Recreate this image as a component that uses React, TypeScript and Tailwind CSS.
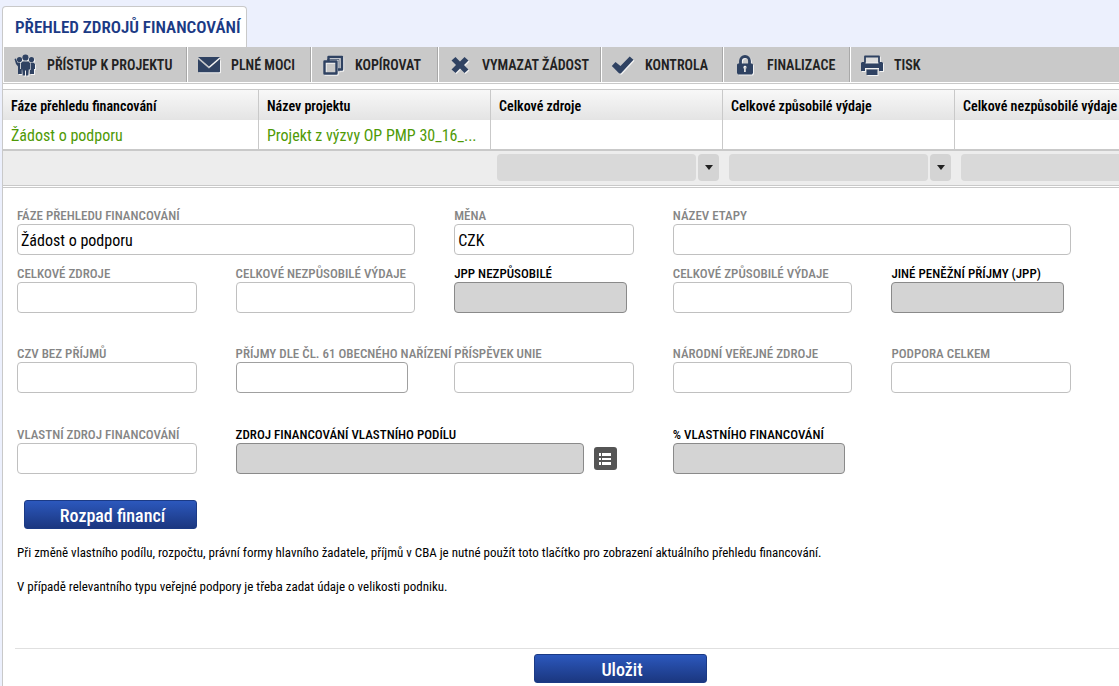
import { useState, type ReactNode } from "react";
import { clsx } from "clsx";

const iconClass = "h-[22px] w-[24px] shrink-0 text-[#2f4262] drop-shadow-[1px_1px_0_#f2f2f2]";

function Icon({ children }: { children: ReactNode }) {
  return (
    <svg viewBox="0 0 24 22" className={iconClass} fill="currentColor" aria-hidden>
      {children}
    </svg>
  );
}

const toolbar: { label: string; width: string; icon: ReactNode }[] = [
  {
    label: "Přístup k projektu",
    width: "w-[184px]",
    icon: (
      <Icon>
        <circle cx="12.500" cy="3.500" r="3.100" />
        <circle cx="6.500" cy="5.500" r="2.600" />
        <circle cx="18.500" cy="5.500" r="2.600" />
        <path d="M9.500 7.500h6l1.500 1.500v6.500h-1.200l-.5 6h-2.300v-5h-1v5H9.700l-.5-6H8V9z" />
        <path d="M1.500 5l1.500-.6L4.500 8.500h2.700v6.500h1.600v5H5V12.500L3 10z" />
        <path d="M17.600 8.500h2.700L22 10v5h-1v5h-4.200v-4h.8z" />
      </Icon>
    ),
  },
  {
    label: "Plné moci",
    width: "w-[124px]",
    icon: (
      <Icon>
        <path d="M1 3h22L12 12.500z" />
        <path d="M1 5v12.500q0 .8.8.8h20.400q.8 0 .8-.8V5L12 14.500z" />
      </Icon>
    ),
  },
  {
    label: "Kopírovat",
    width: "w-[127px]",
    icon: (
      <Icon>
        <path
          d="M3.500 7.500h12v12h-12zM7.500 6.500V3H21v12.500h-4"
          fill="none"
          stroke="currentColor"
          strokeWidth="2.400"
          strokeLinejoin="round"
        />
        <path d="M6 5.500h12v12" fill="none" stroke="currentColor" strokeWidth=".7" />
      </Icon>
    ),
  },
  {
    label: "Vymazat žádost",
    width: "w-[163px]",
    icon: (
      <Icon>
        <path d="M7.500 3L12 7.500 16.500 3l4 3.500L16 11l4.500 4.500-4 3.500-4.500-4.500L7.500 19l-4-3.500L8 11 3.500 6.500z" />
      </Icon>
    ),
  },
  {
    label: "Kontrola",
    width: "w-[122px]",
    icon: (
      <Icon>
        <path d="M.8 12L4.500 8l5 4L18.700 2.500l3.800 3.300L9.800 19.500H8.200z" />
      </Icon>
    ),
  },
  {
    label: "Finalizace",
    width: "w-[127px]",
    icon: (
      <Icon>
        <path d="M7.500 10V7a4.500 4.500 0 0 1 9 0v3" fill="none" stroke="currentColor" strokeWidth="2.800" />
        <path
          fillRule="evenodd"
          d="M5 9.500h14l1 1V19l-1 1.500H5L4 19v-8.500zM12 11.800a1.700 1.700 0 0 0-.9 3.100V18h1.800v-3.100a1.700 1.700 0 0 0-.9-3.100z"
        />
      </Icon>
    ),
  },
  {
    label: "Tisk",
    width: "w-[122px]",
    icon: (
      <Icon>
        <path d="M5 8.500V2.500h14v6" fill="#dcdcdc" stroke="currentColor" strokeWidth="1.800" strokeLinejoin="round" />
        <path d="M2 8h3.500v1.500h13V8H22l1 1v8h-4v-3H5v3H1V9z" />
        <path d="M6.500 15.500h11V21h-11z" />
      </Icon>
    ),
  },
];

const columns = [
  { title: "Fáze přehledu financování", value: "Žádost o podporu", filter: false },
  { title: "Název projektu", value: "Projekt z výzvy OP PMP 30_16_...", filter: false },
  { title: "Celkové zdroje", value: "", filter: true },
  { title: "Celkové způsobilé výdaje", value: "", filter: true },
  { title: "Celkové nezpůsobilé výdaje", value: "", filter: true },
];

type FieldProps = {
  id: string;
  label: string;
  value?: string;
  wide?: boolean;
  // short and filled boxes leave a little more room on the right
  short?: boolean;
  filled?: boolean;
  picker?: boolean;
};

function Field({ id, label, value = "", wide, short, filled, picker }: FieldProps) {
  const [text, setText] = useState(value);
  return (
    <div className={clsx("min-w-0", wide && "col-span-2")}>
      <label
        htmlFor={id}
        className={clsx(
          "block h-4 text-[13px] leading-4 font-medium whitespace-nowrap uppercase",
          filled ? "text-black" : "text-[#858585]",
        )}
      >
        {label}
      </label>
      <div
        className={clsx(
          "flex items-center gap-[10px]",
          picker ? "pr-[56px]" : short || filled ? "pr-[46px]" : "pr-[39px]",
        )}
      >
        <input
          id={id}
          value={text}
          onChange={(e) => setText(e.target.value)}
          className={clsx(
            "h-[31px] w-full min-w-0 rounded border px-[3px] pt-px text-base text-black outline-none",
            filled ? "border-[#8a8a8a] bg-[#d4d4d4]" : short ? "border-[#a0a0a0] bg-white" : "border-[#c0c0c0] bg-white",
          )}
        />
        {picker && (
          <button
            type="button"
            aria-label="Vybrat ze seznamu"
            className="flex h-[23px] w-[23px] shrink-0 items-center justify-center rounded-[3px] bg-[#555]"
          >
            <svg viewBox="0 0 12 12" className="h-3 w-3" fill="#fff" aria-hidden>
              <path d="M0 0h2v3H0zM3 0h9v3H3zM0 5h2v2H0zM3 5h9v2H3zM0 9h2v3H0zM3 9h9v3H3z" />
            </svg>
          </button>
        )}
      </div>
    </div>
  );
}

function BlueButton({ children }: { children: ReactNode }) {
  return (
    <button
      type="button"
      className="h-[29px] w-[173px] rounded-[3px] border border-[#1b3a85] bg-linear-to-b from-[#2c58bd] to-[#1b3780] pt-px pl-1 text-lg leading-7 font-medium text-white"
    >
      {children}
    </button>
  );
}

export default function App() {
  return (
    <div className="min-h-screen overflow-hidden bg-[#ecf0fd] pt-[6px] pl-[2px] font-['Roboto_Condensed','Liberation_Sans_Narrow',Roboto,sans-serif] text-black">
      <h1 className="flex h-[41px] w-[245px] items-center rounded-t border border-b-0 border-[#c9c9c9] bg-white pt-px pl-3 text-[17px] font-semibold whitespace-nowrap text-[#1b3a85] uppercase">
        Přehled zdrojů financování
      </h1>

      <div className="min-h-[639px] border-l border-[#c9c9c9] bg-white">
        <nav className="border-b border-[#c9c9c9] pb-px">
          <div className="flex h-[35px] bg-[#c9c9c9]">
            {toolbar.map((item, i) => (
              <button
                key={item.label}
                type="button"
                className={clsx(
                  "flex shrink-0 items-center gap-[10px] border-l border-white pt-px pl-[9px] text-sm font-semibold whitespace-nowrap text-[#222] uppercase",
                  i < toolbar.length - 1 && "border-r border-r-[#a8a8a8]",
                  item.width,
                )}
              >
                {item.icon}
                {item.label}
              </button>
            ))}
          </div>
        </nav>

        <div className="mt-[5px] overflow-hidden border-y border-[#c9c9c9] pb-px">
          <table className="w-[1184px] table-fixed border-separate border-spacing-0 text-left">
            <colgroup>
              <col className="w-[256px]" />
              <col span={4} className="w-[232px]" />
            </colgroup>
            <thead>
              <tr className="h-[30px] bg-linear-to-b from-[#f8f8f8] to-[#e4e4e4]">
                {columns.map((c) => (
                  <th
                    key={c.title}
                    className="border-r border-[#c9c9c9] px-2 pt-[2px] pb-0 text-sm font-semibold whitespace-nowrap"
                  >
                    {c.title}
                  </th>
                ))}
              </tr>
            </thead>
            <tbody>
              <tr className="h-[31px]">
                {columns.map((c) => (
                  <td
                    key={c.title}
                    className="border-r border-b-2 border-[#c9c9c9] px-2 pt-[2px] pb-0 text-base leading-6 whitespace-nowrap text-[#4f9a06]"
                  >
                    {c.value}
                  </td>
                ))}
              </tr>
            </tbody>
            <tfoot>
              <tr className="h-[35px] bg-[#ededed]">
                {columns.map((c) => (
                  <td key={c.title} className="border-b border-[#c9c9c9] pt-0 pr-1 pb-px pl-[6px]">
                    {c.filter && (
                      <div className="flex h-[27px] gap-[2px]">
                        <input
                          aria-label={c.title}
                          className="min-w-0 flex-1 rounded bg-[#d9d9d9] px-1 text-sm outline-none"
                        />
                        <button
                          type="button"
                          aria-label={`Filtr ${c.title}`}
                          className="flex w-[21px] items-center justify-center rounded bg-[#d4d4d4]"
                        >
                          <svg viewBox="0 0 8 5" className="h-[5px] w-2" aria-hidden>
                            <path d="M0 0h8L4 5z" fill="#222" />
                          </svg>
                        </button>
                      </div>
                    )}
                  </td>
                ))}
              </tr>
            </tfoot>
          </table>
        </div>

        <form className="pt-5 pr-[9px] pl-[14px]" onSubmit={(e) => e.preventDefault()}>
          <div className="grid grid-cols-5">
            <Field id="faze" label="Fáze přehledu financování" value="Žádost o podporu" wide />
            <Field id="mena" label="Měna" value="CZK" />
            <Field id="etapa" label="Název etapy" wide />
          </div>
          <div className="mt-[11px] grid grid-cols-5">
            <Field id="zdroje" label="Celkové zdroje" />
            <Field id="nezpusobile" label="Celkové nezpůsobilé výdaje" />
            <Field id="jpp-nezpusobile" label="JPP nezpůsobilé" filled />
            <Field id="zpusobile" label="Celkové způsobilé výdaje" />
            <Field id="jpp" label="Jiné peněžní příjmy (JPP)" filled />
          </div>
          <div className="mt-[33px] grid grid-cols-5">
            <Field id="czv" label="CZV bez příjmů" />
            <Field id="prijmy" label="Příjmy dle čl. 61 obecného nařízení" short />
            <Field id="unie" label="Příspěvek Unie" />
            <Field id="narodni" label="Národní veřejné zdroje" />
            <Field id="podpora" label="Podpora celkem" />
          </div>
          <div className="mt-[34px] grid grid-cols-5">
            <Field id="vlastni" label="Vlastní zdroj financování" />
            <Field id="podil" label="Zdroj financování vlastního podílu" filled wide picker />
            <Field id="procento" label="% vlastního financování" filled />
          </div>

          <div className="mt-[26px] pl-[7px]">
            <BlueButton>Rozpad financí</BlueButton>
          </div>
          <p className="mt-[14px] text-[13px] leading-5">
            Při změně vlastního podílu, rozpočtu, právní formy hlavního žadatele, příjmů v CBA je nutné použít toto
            tlačítko pro zobrazení aktuálního přehledu financování.
          </p>
          <p className="mt-[14px] text-[13px] leading-5">
            V případě relevantního typu veřejné podpory je třeba zadat údaje o velikosti podniku.
          </p>
        </form>

        <footer className="mt-[51px] ml-3 flex justify-center border-t border-[#e0e0e0] pt-[5px] pl-[106px]">
          <BlueButton>Uložit</BlueButton>
        </footer>
      </div>
    </div>
  );
}
